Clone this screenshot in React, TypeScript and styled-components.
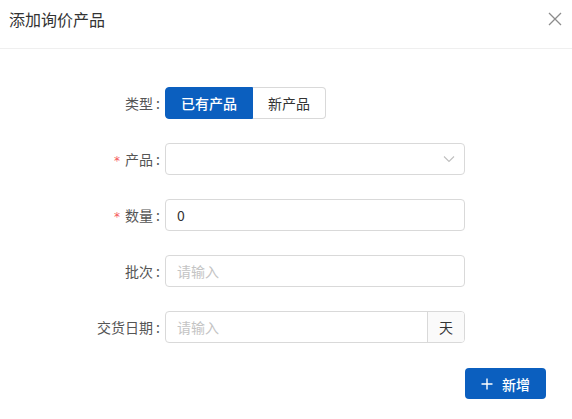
import { useState } from "react";
import styled, { createGlobalStyle } from "styled-components";

const GlobalStyle = createGlobalStyle`
  html, body {
    margin: 0;
    padding: 0;
    background: #fff;
    font-family: "Noto Sans CJK SC", "Noto Sans", sans-serif;
    color: #333;
  }
  * { box-sizing: border-box; }
`

const Dialog = styled.div`
  width: 572px;
  height: 419px;
  background: #fff;
  display: flex;
  flex-direction: column;
`

const Header = styled.div`
  height: 49px;
  display: flex;
  justify-content: space-between;
  align-items: flex-start;
  padding: 7px 9px 0 9px;
  border-bottom: 1px solid #efefef;
`

const Title = styled.div`
  font-size: 16px;
  line-height: 24px;
  color: #333;
`

const CloseButton = styled.button`
  border: none;
  background: none;
  padding: 0;
  margin-top: 4px;
  width: 16px;
  height: 16px;
  cursor: pointer;
  color: #8c8c8c;
  display: flex;
`

const Form = styled.form`
  display: flex;
  flex-direction: column;
  gap: 24px;
  padding: 38px 0 0 0;
`

const Row = styled.div`
  display: grid;
  grid-template-columns: 165px 300px;
  align-items: center;
  height: 32px;
`

const Label = styled.label`
  font-size: 14px;
  color: #555;
  text-align: right;
  padding-right: 5px;
  white-space: nowrap;
`

const Colon = styled.span`
  margin-left: 3px;
`

const Star = styled.span`
  color: #f5595c;
  font-size: 12px;
  margin-right: 5px;
  font-family: "DejaVu Sans", sans-serif;
`

const Segmented = styled.div`
  display: flex;
  height: 32px;
`

const SegButton = styled.button<{ $active?: boolean }>`
  height: 32px;
  padding: 0 15px;
  font-family: inherit;
  font-size: 14px;
  cursor: pointer;
  border: 1px solid ${p => (p.$active ? "#0b5fbf" : "#d9d9d9")};
  background: ${p => (p.$active ? "#0b5fbf" : "#fff")};
  color: ${p => (p.$active ? "#fff" : "#333")};
  font-weight: ${p => (p.$active ? 500 : 400)};
  &:first-child {
    border-radius: 4px 0 0 4px;
  }
  &:last-child {
    border-radius: 0 4px 4px 0;
    border-left: none;
  }
`

const Field = styled.div`
  width: 300px;
  height: 32px;
  border: 1px solid #d9d9d9;
  border-radius: 4px;
  display: flex;
  align-items: center;
  background: #fff;
  overflow: hidden;
`

const Input = styled.input`
  flex: 1;
  min-width: 0;
  height: 100%;
  border: none;
  outline: none;
  padding: 0 11px;
  font-family: inherit;
  font-size: 14px;
  color: #333;
  background: transparent;
  &::placeholder {
    color: #c4c4c4;
  }
`

const Arrow = styled.span`
  width: 30px;
  display: flex;
  justify-content: center;
  color: #bfbfbf;
`

const Addon = styled.span`
  width: 37px;
  height: 100%;
  display: flex;
  align-items: center;
  justify-content: center;
  background: #fafafa;
  border-left: 1px solid #d9d9d9;
  font-size: 14px;
  color: #333;
`

const Footer = styled.div`
  display: flex;
  justify-content: flex-end;
  padding: 25px 26px 0 0;
`

const PrimaryButton = styled.button`
  width: 81px;
  height: 31px;
  border: none;
  border-radius: 4px;
  background: #0b5fbf;
  color: #fff;
  font-family: inherit;
  font-size: 14px;
  font-weight: 500;
  display: flex;
  align-items: center;
  justify-content: center;
  gap: 9px;
  cursor: pointer;
`

const App = () => {
  const [tipo, setTipo] = useState("old");
  const [qtd, setQtd] = useState("0");

  return (
    <>
      <GlobalStyle />
      <Dialog>
        <Header>
          <Title>添加询价产品</Title>
          <CloseButton type="button">
            <svg width="16" height="16" viewBox="0 0 16 16">
              <path d="M2 2L14 14M14 2L2 14" stroke="currentColor" strokeWidth="1.3" fill="none" />
            </svg>
          </CloseButton>
        </Header>

        <Form onSubmit={e => e.preventDefault()}>
          <Row>
            <Label>类型<Colon>:</Colon></Label>
            <Segmented>
              <SegButton type="button" $active={tipo === "old"} onClick={() => setTipo("old")}>已有产品</SegButton>
              <SegButton type="button" $active={tipo === "new"} onClick={() => setTipo("new")}>新产品</SegButton>
            </Segmented>
          </Row>

          <Row>
            <Label><Star>*</Star>产品<Colon>:</Colon></Label>
            <Field>
              <Input readOnly />
              <Arrow>
                <svg width="12" height="8" viewBox="0 0 12 8">
                  <path d="M1 1.5L6 6.5L11 1.5" stroke="currentColor" strokeWidth="1.1" fill="none" />
                </svg>
              </Arrow>
            </Field>
          </Row>

          <Row>
            <Label><Star>*</Star>数量<Colon>:</Colon></Label>
            <Field>
              <Input value={qtd} onChange={e => setQtd(e.target.value)} />
            </Field>
          </Row>

          <Row>
            <Label>批次<Colon>:</Colon></Label>
            <Field>
              <Input placeholder="请输入" />
            </Field>
          </Row>

          <Row>
            <Label>交货日期<Colon>:</Colon></Label>
            <Field>
              <Input placeholder="请输入" />
              <Addon>天</Addon>
            </Field>
          </Row>
        </Form>

        <Footer>
          <PrimaryButton type="button">
            <svg width="12" height="12" viewBox="0 0 12 12">
              <path d="M6 0.5V11.5M0.5 6H11.5" stroke="currentColor" strokeWidth="1.4" fill="none" />
            </svg>
            新增
          </PrimaryButton>
        </Footer>
      </Dialog>
    </>
  );
};

export default App;
